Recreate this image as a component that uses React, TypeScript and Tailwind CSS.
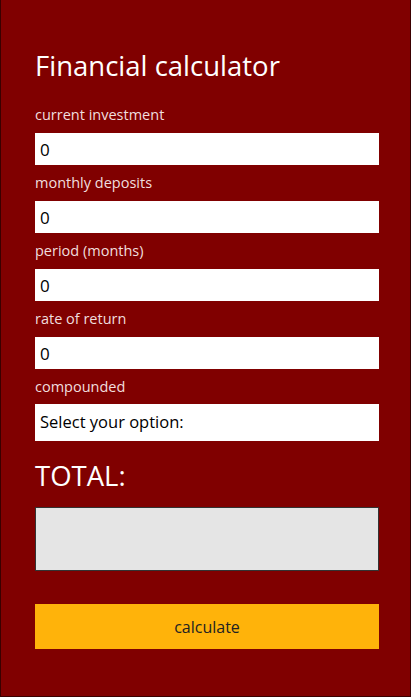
export default function App() {
  const fields = ['current investment', 'monthly deposits', 'period (months)', 'rate of return']

  return (
    <div className="min-h-[697px] w-[411px] bg-[#800000] border-x border-b border-[#3a0000] px-[34px] pt-[48px] pb-[40px] font-['Open_Sans',sans-serif]">
      <h1 className="text-[27.5px] leading-[36px] text-white">Financial calculator</h1>

      <form className="mt-[21px]" onSubmit={(e) => e.preventDefault()}>
        {fields.map((label) => (
          <div key={label} className="mb-[8px]">
            <label className="block text-[14.5px] leading-[20px] text-[#f0dede] mb-[8px]">{label}</label>
            <input
              type="text"
              defaultValue="0"
              className="block w-[344px] h-[32px] bg-white px-[5px] text-[17px] text-black outline-none"
            />
          </div>
        ))}

        <div>
          <label className="block text-[14.5px] leading-[20px] text-[#f0dede] mb-[7px]">compounded</label>
          <div className="w-[344px] h-[37px] bg-white px-[5px] flex items-center text-[16.5px] text-black">
            Select your option:
          </div>
        </div>

        <h2 className="mt-[17px] text-[27.5px] leading-[36px] text-white">TOTAL:</h2>

        <div className="mt-[13px] w-[344px] h-[64px] bg-[#e5e5e5] border border-[#333]" />

        <button
          type="submit"
          className="mt-[33px] w-[344px] h-[45px] bg-[#ffb30a] text-[16px] text-[#222]"
        >
          calculate
        </button>
      </form>
    </div>
  )
}
